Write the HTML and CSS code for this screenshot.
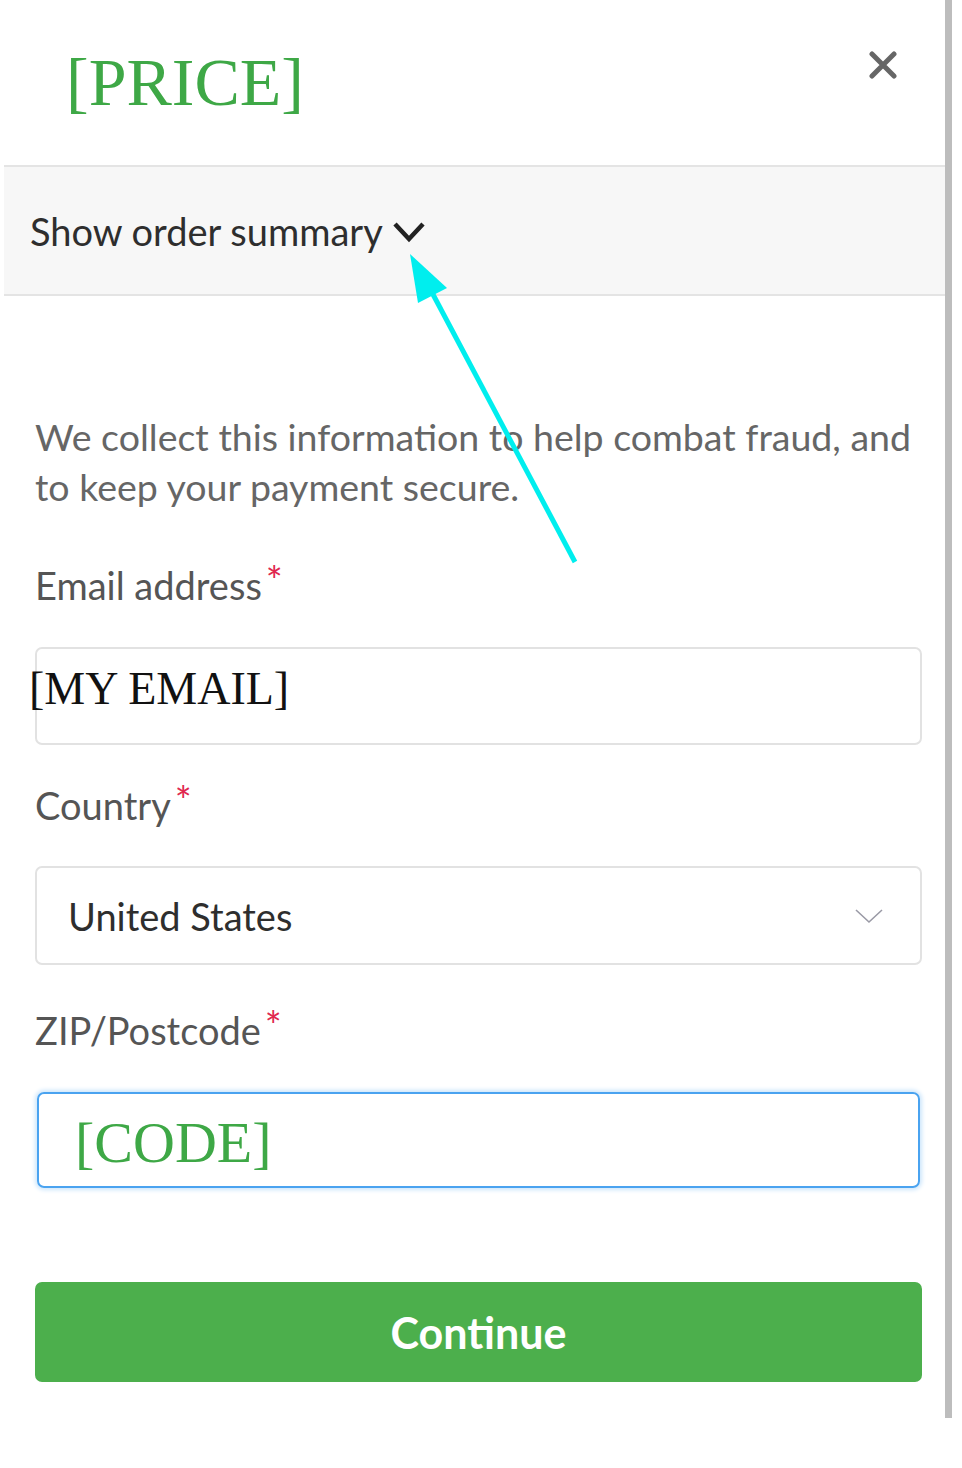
FILE: index.html
```html
<!DOCTYPE html>
<html>
  <head>
    <title>Checkout</title>
    <link rel="stylesheet" href="styles.css">
  </head>
  <body>
    <div class="panel">
      <div class="header">
        <div class="price">[PRICE]</div>
        <button class="close" aria-label="Close">
          <svg width="28" height="28" viewBox="0 0 28 28">
            <path d="M3 3 L25 25 M25 3 L3 25" stroke="#666" stroke-width="5" stroke-linecap="round" fill="none"/>
          </svg>
        </button>
      </div>
      <div class="summary">
        <span>Show order summary</span>
        <svg class="summary-chevron" width="36" height="24" viewBox="0 0 36 24">
          <path d="M3 4 L17 19 L31 4" stroke="#222" stroke-width="4.5" fill="none" stroke-linejoin="miter"/>
        </svg>
      </div>
      <div class="form">
        <p class="intro">We collect this information to help combat fraud, and to keep your payment secure.</p>

        <label class="label email-label">Email address<span class="req">*</span></label>
        <div class="field email-field">
          <span class="email-value">[MY EMAIL]</span>
        </div>

        <label class="label">Country<span class="req">*</span></label>
        <div class="field select-field">
          <span>United States</span>
          <svg width="30" height="18" viewBox="0 0 30 18">
            <path d="M2 3 L15 15 L28 3" stroke="#9a9aa6" stroke-width="1.6" fill="none"/>
          </svg>
        </div>

        <label class="label zip-label">ZIP/Postcode<span class="req">*</span></label>
        <div class="field zip-field">
          <span class="zip-value">[CODE]</span>
        </div>

        <button class="continue">Continue</button>
      </div>
    </div>

    <svg class="arrow" width="962" height="1468" viewBox="0 0 962 1468">
      <line x1="575" y1="562" x2="428" y2="285" stroke="#00eeee" stroke-width="5"/>
      <polygon points="410,254 418,303 447,288" fill="#00eeee"/>
    </svg>
  </body>
</html>
```

FILE: styles.css
```css
body {
  margin: 0;
  font-family: Lato, "Open Sans", sans-serif;
  background: #fff;
}
.panel {
  width: 941px;
  height: 1418px;
  margin-left: 4px;
  border-right: 7px solid #bdbdbd;
}
.header {
  height: 167px;
  border-bottom: 2px solid #e4e4e4;
  display: flex;
  justify-content: space-between;
  align-items: flex-start;
  padding: 0 48px 0 62px;
  box-sizing: border-box;
}
.price {
  font-family: "Liberation Serif", serif;
  font-size: 68px;
  color: #3ea846;
  margin-top: 48px;
  line-height: 1;
}
.close {
  margin-top: 51px;
  padding: 0;
  border: none;
  background: none;
  cursor: pointer;
}
.summary {
  height: 127px;
  background: #f7f7f7;
  border-bottom: 2px solid #e4e4e4;
  display: flex;
  align-items: center;
  padding-left: 26px;
  font-size: 38px;
  color: #2e2e2e;
}
.summary-chevron {
  margin-left: 9px;
  margin-top: 2px;
}
.form {
  padding: 0 23px 0 31px;
  display: flex;
  flex-direction: column;
}
.intro {
  margin: 116px 0 0;
  font-size: 37.5px;
  line-height: 50px;
  color: #666;
}
.label {
  font-size: 38px;
  color: #555;
  margin-top: 35px;
  line-height: 51px;
}
.email-label {
  margin-top: 48px;
}
.zip-label {
  margin-top: 40px;
}
.req {
  color: #e0284f;
  font-size: 40px;
  line-height: 0;
  vertical-align: 4px;
  margin-left: 4px;
}
.field {
  height: 98px;
  box-sizing: border-box;
  border: 2px solid #e2e2e2;
  border-radius: 7px;
  display: flex;
  align-items: center;
  margin-top: 36px;
}
.email-value {
  font-family: "Liberation Serif", serif;
  font-size: 46px;
  color: #111;
  margin-left: -8px;
  margin-top: -16px;
}
.select-field {
  height: 99px;
  margin-top: 35px;
  justify-content: space-between;
  padding: 0 36px 0 31px;
  font-size: 38px;
  color: #2e2e2e;
}
.zip-field {
  border: 2px solid #4aa3f0;
  box-shadow: 0 0 4px 2px #cde6fb;
  margin-left: 2px;
  margin-right: 2px;
  height: 96px;
}
.zip-value {
  font-family: "Liberation Serif", serif;
  font-size: 58px;
  color: #3ea846;
  margin-left: 36px;
  margin-top: 4px;
}
.continue {
  margin-top: 94px;
  height: 100px;
  border: none;
  border-radius: 7px;
  background: #4caf4c;
  color: #fff;
  font-family: Lato, sans-serif;
  font-weight: bold;
  font-size: 43px;
  cursor: pointer;
}
.arrow {
  position: absolute;
  top: 0;
  left: 0;
  pointer-events: none;
}
```
